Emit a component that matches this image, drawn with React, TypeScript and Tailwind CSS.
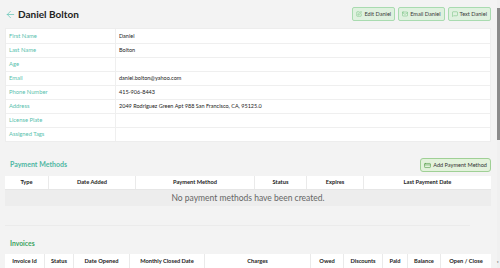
import React from "react";
import { ArrowLeft, SquarePen, Mail, MessageSquare, CreditCard } from "lucide-react";

const font = { fontFamily: 'Lato, "Noto Sans", sans-serif' };

const info: [string, string][] = [
  ["First Name", "Daniel"],
  ["Last Name", "Bolton"],
  ["Age", ""],
  ["Email", "daniel.bolton@yahoo.com"],
  ["Phone Number", "415-906-8443"],
  ["Address", "2049 Rodriguez Green Apt 988 San Francisco, CA, 95125.0"],
  ["License Plate", ""],
  ["Assigned Tags", ""],
];

const payCols: [string, number][] = [
  ["Type", 43],
  ["Date Added", 87],
  ["Payment Method", 119],
  ["Status", 52],
  ["Expires", 57],
  ["Last Payment Date", 128],
];

const invCols: [string, number][] = [
  ["Invoice Id", 39],
  ["Status", 29],
  ["Date Opened", 56],
  ["Monthly Closed Date", 75],
  ["Charges", 106],
  ["Owed", 33],
  ["Discounts", 39],
  ["Paid", 25],
  ["Balance", 33],
  ["Open / Close", 51],
];

function Btn({ icon, label }: { icon: React.ReactNode; label: string }) {
  return (
    <button className="flex items-center gap-[2px] h-[14px] px-[3px] rounded-[2px] border border-[#a9dbb0] bg-[#dff1df] text-[5.6px] text-[#3a3a3a] leading-none">
      {icon}
      <span>{label}</span>
    </button>
  );
}

export default function App() {
  return (
    <div className="relative w-[500px] h-[268px] overflow-hidden bg-[#f3f3f3]" style={font}>
      <div className="pl-[5px] pr-[9px]">
        {/* Header */}
        <div className="flex items-center justify-between h-[28px]">
          <div className="flex items-center gap-[2px] pt-[1px]">
            <ArrowLeft size={11} strokeWidth={1.5} className="text-[#5cc3b3]" />
            <span className="text-[10px] font-bold text-[#222]">Daniel Bolton</span>
          </div>
          <div className="flex items-center gap-[3px] pb-[1px]">
            <Btn icon={<SquarePen size={6} strokeWidth={2} className="text-[#6fbf7a]" />} label="Edit Daniel" />
            <Btn icon={<Mail size={6} strokeWidth={2} className="text-[#6fbf7a]" />} label="Email Daniel" />
            <Btn icon={<MessageSquare size={6} strokeWidth={2} className="text-[#6fbf7a]" />} label="Text Daniel" />
          </div>
        </div>

        {/* Info table */}
        <div className="bg-white border border-[#ededed]">
          {info.map(([k, v], i) => (
            <div key={k} className={`flex h-[14px] ${i > 0 ? "border-t border-[#efefef]" : ""}`}>
              <div className="w-[110px] border-r border-[#efefef] flex items-center pl-[3px] text-[5.8px] text-[#59bfae]">
                {k}
              </div>
              <div className="flex-1 flex items-center pl-[3px] text-[5.5px] text-[#222]">{v}</div>
            </div>
          ))}
        </div>

        {/* Payment Methods */}
        <div className="flex items-end justify-between h-[34px] pb-[4px]">
          <span className="pl-[5px] pb-[3px] text-[7px] font-bold text-[#4fb7a3]">Payment Methods</span>
          <button className="flex items-center gap-[2px] h-[14px] px-[3px] rounded-[3px] border border-[#9fd095] bg-[#e3f2dc] text-[5.6px] text-[#333] leading-none">
            <CreditCard size={7} strokeWidth={2} className="text-[#4f9a45]" />
            <span>Add Payment Method</span>
          </button>
        </div>
        <div className="bg-white">
          <div className="flex h-[14px] border-b border-[#e6e6e6]">
            {payCols.map(([c, w], i) => (
              <div
                key={c}
                className={`flex items-center justify-center text-[5.7px] font-bold text-[#222] ${i > 0 ? "border-l border-[#eaeaea]" : ""}`}
                style={{ width: w }}
              >
                {c}
              </div>
            ))}
          </div>
          <div className="h-[16px] bg-[#ededed] flex items-center justify-center text-[8.5px] text-[#666]">
            No payment methods have been created.
          </div>
        </div>

        <div className="mt-[19px] border-t border-[#ebebeb] mr-[21px]" />

        {/* Invoices */}
        <div className="h-[28px] flex items-end pb-[6px]">
          <span className="pl-[5px] text-[6.8px] font-bold text-[#3ba35f]">Invoices</span>
        </div>
        <div className="bg-white">
          <div className="flex h-[14px]">
            {invCols.map(([c, w], i) => (
              <div
                key={c}
                className={`flex items-center justify-center text-[5.7px] font-bold text-[#222] ${i > 0 ? "border-l border-[#eaeaea]" : ""}`}
                style={{ width: w }}
              >
                {c}
              </div>
            ))}
          </div>
        </div>
      </div>

      {/* scrollbar overlay */}
      <div className="absolute right-0 top-0 w-[3px] h-[268px] bg-[#f0f0f0]">
        <div className="mt-[8px] h-[132px] w-[3px] bg-[#8a8a8a]" />
      </div>
      <div className="absolute right-0 bottom-[4px] w-[3px] h-[3px] text-[3px] text-[#555] leading-none">▾</div>
    </div>
  );
}
